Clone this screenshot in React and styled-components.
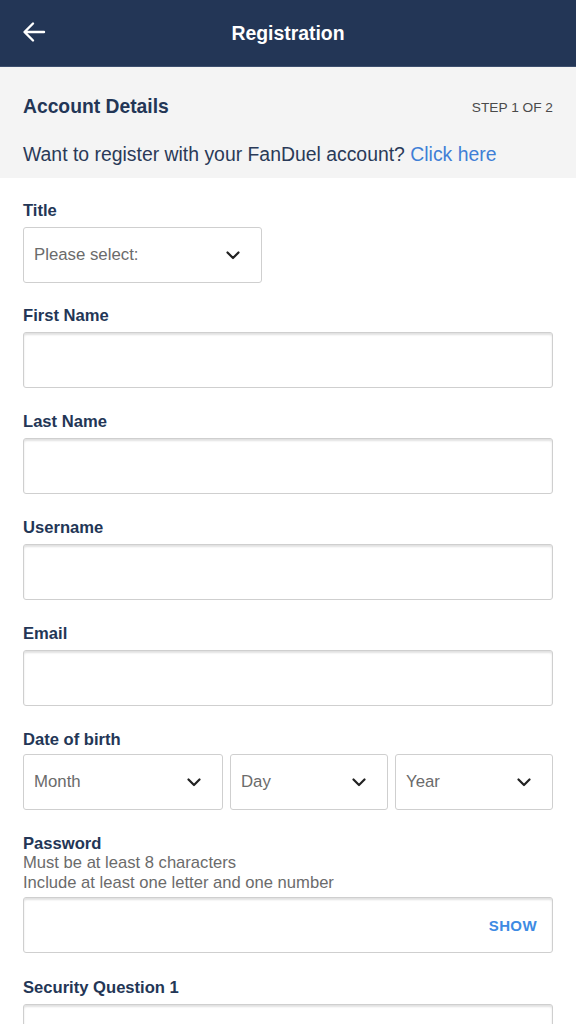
import React from 'react'
import styled, { createGlobalStyle } from 'styled-components'

const GlobalStyle = createGlobalStyle`
	body {
		margin: 0;
		background: #ffffff;
		font-family: 'Liberation Sans', Arial, sans-serif;
	}
`

const Page = styled.div`
	width: 576px;
	min-height: 1024px;
	background: #ffffff;
`

const Header = styled.header`
	height: 66px;
	background: #233656;
	display: flex;
	align-items: center;
	justify-content: center;
	position: relative;
	color: #ffffff;
	font-size: 19.4px;
	font-weight: bold;
	.back {
		position: absolute;
		left: 22px;
		top: 21px;
	}
`

const Intro = styled.section`
	background: #f4f4f4;
	padding: 29px 23px 0 23px;
	height: 112px;
	box-sizing: border-box;
	border-top: 1px solid #3d4f6e;
	.row {
		display: flex;
		justify-content: space-between;
		align-items: center;
	}
	h2 {
		margin: 0;
		font-size: 19.3px;
		line-height: 22px;
		color: #233656;
	}
	.step {
		font-size: 13.7px;
		color: #4a4a4a;
	}
	p {
		margin: 25px 0 0 0;
		font-size: 19.4px;
		line-height: 22px;
		color: #2a3a58;
	}
	a {
		color: #3f7fd6;
		text-decoration: none;
	}
`

const Form = styled.form`
	padding: 23px 23px 0 23px;
`

const Field = styled.div`
	margin-bottom: ${p => p.$gap || '24px'};
`

const Label = styled.label`
	display: block;
	font-size: 16.6px;
	line-height: 19px;
	font-weight: bold;
	color: #233656;
	margin-bottom: ${p => p.$gap || '7px'};
`

const Hint = styled.div`
	font-size: 16.6px;
	line-height: 20px;
	color: #6b6b6b;
	margin-bottom: ${p => p.$gap || '0'};
`

const Box = styled.div`
	box-sizing: border-box;
	height: 56px;
	width: ${p => p.$width || '100%'};
	border: 1px solid #cfcfcf;
	border-radius: 3px;
	background: #ffffff;
	box-shadow: ${p => (p.$inset ? 'inset 0 2px 2px rgba(0, 0, 0, 0.12)' : 'none')};
	display: flex;
	align-items: center;
	justify-content: space-between;
	padding: 0 ${p => p.$right || '22px'} 0 10px;
	font-size: 16.8px;
	color: #6b6b6b;
	flex: ${p => p.$flex || 'none'};
`

const Show = styled.span`
	color: #3d8be3;
	font-size: 15px;
	font-weight: bold;
	letter-spacing: 0.4px;
`

const DateRow = styled.div`
	display: flex;
	gap: 7px;
`

function Chevron() {
	return (
		<svg width="14" height="9" viewBox="0 0 14 9">
			<path d="M1.5 1.5 L7 7 L12.5 1.5" fill="none" stroke="#222" strokeWidth="2.2" strokeLinecap="round" strokeLinejoin="round" />
		</svg>
	)
}

function Select(props) {
	return (
		<Box $width={props.width} $flex={props.flex} $right="21px">
			<span>{props.placeholder}</span>
			<Chevron />
		</Box>
	)
}

function TextField(props) {
	return (
		<Field>
			<Label>{props.label}</Label>
			<Box $inset />
		</Field>
	)
}

function App() {
	return (
		<Page>
			<GlobalStyle />
			<Header>
				<svg className="back" width="24" height="22" viewBox="0 0 24 22">
					<path d="M22 11 H3 M11 2.5 L2.5 11 L11 19.5" fill="none" stroke="#fff" strokeWidth="2.4" strokeLinecap="round" strokeLinejoin="round" />
				</svg>
				Registration
			</Header>
			<Intro>
				<div className="row">
					<h2>Account Details</h2>
					<span className="step">STEP 1 OF 2</span>
				</div>
				<p>
					Want to register with your FanDuel account? <a href="#">Click here</a>
				</p>
			</Intro>
			<Form>
				<Field $gap="23px">
					<Label>Title</Label>
					<Select width="239px" placeholder="Please select:" />
				</Field>
				<TextField label="First Name" />
				<TextField label="Last Name" />
				<TextField label="Username" />
				<TextField label="Email" />
				<Field>
					<Label $gap="5px">Date of birth</Label>
					<DateRow>
						<Select flex="0 0 200px" placeholder="Month" />
						<Select flex="0 0 158px" placeholder="Day" />
						<Select flex="1" placeholder="Year" />
					</DateRow>
				</Field>
				<Field $gap="25px">
					<Label $gap="0">Password</Label>
					<Hint>Must be at least 8 characters</Hint>
					<Hint $gap="4px">Include at least one letter and one number</Hint>
					<Box $inset $right="15px">
						<span />
						<Show>SHOW</Show>
					</Box>
				</Field>
				<TextField label="Security Question 1" />
			</Form>
		</Page>
	)
}

export default App
